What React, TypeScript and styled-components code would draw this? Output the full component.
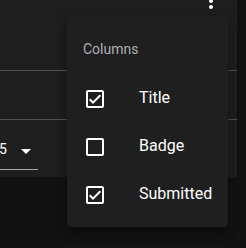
import React, { useState } from "react";
import styled, { createGlobalStyle } from "styled-components";

const GlobalStyle = createGlobalStyle`
  body {
    margin: 0;
    background: #121212;
    font-family: Roboto, "Liberation Sans", sans-serif;
  }
`;

const Stage = styled.div`
  position: relative;
  width: 246px;
  height: 248px;
  overflow: hidden;
`;

const Panel = styled.div`
  width: 237px;
  height: 177px;
  background: #1e1e1e;
  display: flex;
  flex-direction: column;
`;

const Toolbar = styled.div`
  height: 70px;
  display: flex;
  justify-content: flex-end;
  padding-right: 14px;
`;

const IconButton = styled.button`
  width: 24px;
  height: 24px;
  margin-top: -11px;
  padding: 0;
  border: 0;
  background: none;
  color: #ffffff;
  display: flex;
`;

const TableRow = styled.div`
  box-sizing: border-box;
  height: 50px;
  border-top: 1px solid #515151;
  border-bottom: 1px solid #515151;
`;

const Footer = styled.div`
  display: flex;
  align-items: flex-start;
`;

const Select = styled.div`
  box-sizing: border-box;
  width: 40px;
  margin-left: -2px;
  margin-top: 16px;
  padding-bottom: 6px;
  border-bottom: 1px solid #a9a9a9;
  display: flex;
  align-items: center;
  color: #ffffff;
  font-size: 14px;
  line-height: 23px;
`;

const SelectValue = styled.span`
  padding-left: 1px;
  width: 15px;
`;

const Arrow = styled.svg`
  width: 24px;
  height: 24px;
  margin-top: 3px;
  fill: #ffffff;
`;

const Menu = styled.div`
  position: absolute;
  left: 67px;
  top: 17px;
  padding: 8px 0;
  background: #1f1f1f;
  border-radius: 4px;
  box-shadow: 0px 5px 5px -3px rgba(0, 0, 0, 0.2),
    0px 8px 10px 1px rgba(0, 0, 0, 0.14), 0px 3px 14px 2px rgba(0, 0, 0, 0.12);
`;

const Subheader = styled.div`
  padding: 0 16px;
  height: 48px;
  line-height: 48px;
  margin-bottom: 2px;
  font-size: 14px;
  color: #aab0b6;
`;

const Item = styled.label`
  height: 48px;
  padding: 0 16px;
  display: flex;
  align-items: center;
  cursor: pointer;
`;

const CheckIcon = styled.svg`
  width: 24px;
  height: 24px;
  fill: #ffffff;
  flex-shrink: 0;
`;

const ItemLabel = styled.span`
  margin-left: 32px;
  margin-bottom: 3px;
  font-size: 16px;
  line-height: 24px;
  color: #ffffff;
`;

const CHECKED =
  "M19 3H5c-1.11 0-2 .9-2 2v14c0 1.1.89 2 2 2h14c1.11 0 2-.9 2-2V5c0-1.1-.89-2-2-2zm0 16H5V5h14v14zM17.99 9l-1.41-1.42-6.59 6.59-2.58-2.57-1.42 1.41 4 3.99z";
const BLANK =
  "M19 5v14H5V5h14m0-2H5c-1.1 0-2 .9-2 2v14c0 1.1.9 2 2 2h14c1.1 0 2-.9 2-2V5c0-1.1-.9-2-2-2z";

const App: React.FunctionComponent = () => {
  const [columns, setColumns] = useState([
    { name: "Title", visible: true },
    { name: "Badge", visible: false },
    { name: "Submitted", visible: true },
  ]);

  const toggle = (i: number) =>
    setColumns(columns.map((c, j) => (j === i ? { ...c, visible: !c.visible } : c)));

  return (
    <>
      <GlobalStyle />
      <Stage>
        <Panel>
          <Toolbar>
            <IconButton aria-label="columns">
              <svg viewBox="0 0 24 24" width="24" height="24" fill="currentColor">
                <path d="M12 8c1.1 0 2-.9 2-2s-.9-2-2-2-2 .9-2 2 .9 2 2 2zm0 2c-1.1 0-2 .9-2 2s.9 2 2 2 2-.9 2-2-.9-2-2-2zm0 6c-1.1 0-2 .9-2 2s.9 2 2 2 2-.9 2-2-.9-2-2-2z" />
              </svg>
            </IconButton>
          </Toolbar>
          <TableRow />
          <Footer>
            <Select>
              <SelectValue>5</SelectValue>
              <Arrow viewBox="0 0 24 24">
                <path d="M7 10l5 5 5-5z" />
              </Arrow>
            </Select>
          </Footer>
        </Panel>
        <Menu>
          <Subheader>Columns</Subheader>
          {columns.map((c, i) => (
            <Item key={c.name} onClick={() => toggle(i)}>
              <CheckIcon viewBox="0 0 24 24">
                <path d={c.visible ? CHECKED : BLANK} />
              </CheckIcon>
              <ItemLabel>{c.name}</ItemLabel>
            </Item>
          ))}
        </Menu>
      </Stage>
    </>
  );
};

export default App;
